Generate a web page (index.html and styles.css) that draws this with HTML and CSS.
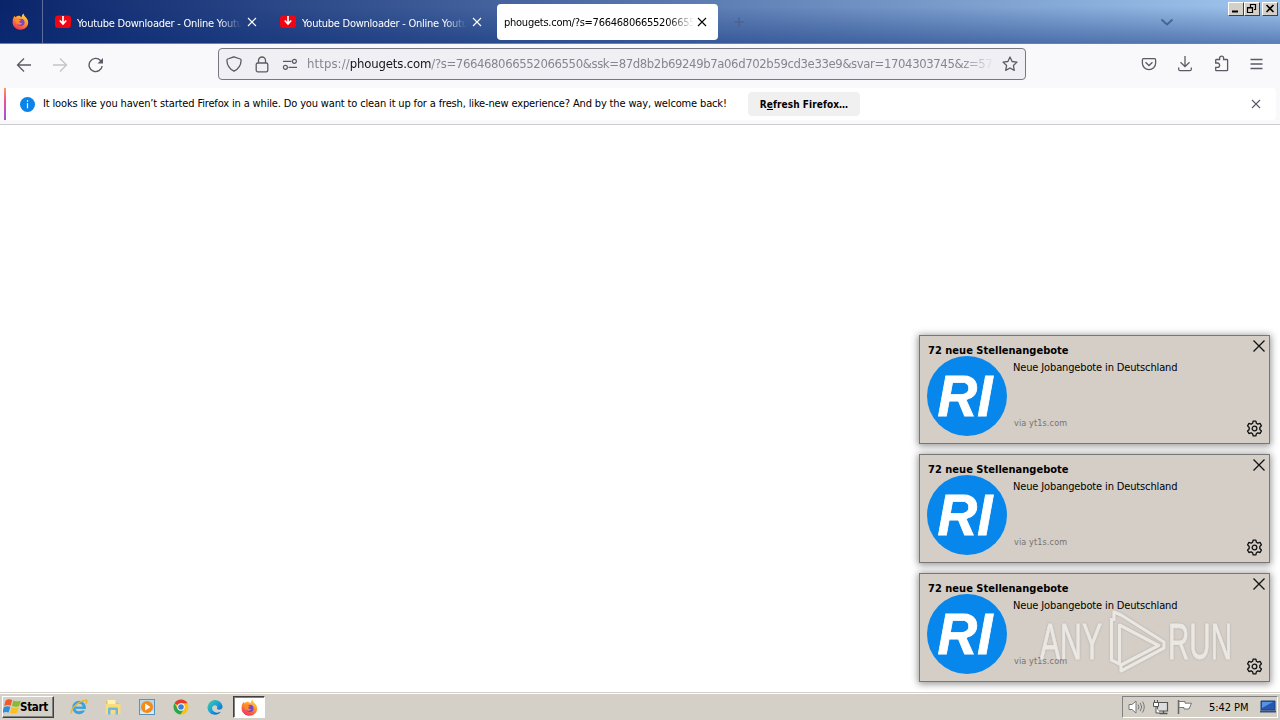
FILE: index.html
```html
<!DOCTYPE html>
<html lang="en">
<head>
<meta charset="utf-8">
<title>phougets.com</title>
<link rel="stylesheet" href="styles.css">
</head>
<body>
<svg class="defs" width="0" height="0">
  <defs>
    <linearGradient id="flame" x1="0.8" y1="0" x2="0.3" y2="1"><stop offset="0" stop-color="#ffe14a"/><stop offset=".45" stop-color="#ff9430"/><stop offset="1" stop-color="#f0305c"/></linearGradient>
    <linearGradient id="edgeg" x1="0" y1="0" x2="1" y2="1"><stop offset="0" stop-color="#45d48a"/><stop offset=".5" stop-color="#1a9de0"/><stop offset="1" stop-color="#1256a8"/></linearGradient>
    <symbol id="firefox" viewBox="0 0 16 16">
      <path d="M1 5.2 2.3 2.6l1 1.5C4.5 3 5.9 2.6 7 2.7L9 4c.3-1.6.8-2.6 1.9-3.5.2 2 1.5 2.8 2.7 4.3 1.4 1.700 1.900 3.600 1.500 5.600-.7 3.100-3.500 5.300-7 5.300C4 15.700.9 12.900.6 9.300.5 7.800.6 6.500 1 5.200z" fill="url(#flame)"/>
      <circle cx="8.300" cy="8.800" r="3.500" fill="#7b45c8"/>
      <path d="M3.300 5.200c1.300-.6 2.500-.2 3.400.8l2 .3c-.2 1-1.700 1.100-2 1.800.1 1.200 1.700 1.900 3.200 1.100-1.100 2.200-4 2.300-5.500.5C3.300 8.500 3 6.800 3.300 5.200z" fill="#ff8a2c"/>
    </symbol>
    <symbol id="ytdl" viewBox="0 0 16 14">
      <rect x="0" y="0.500" width="16" height="12.500" rx="3" fill="#f00612"/>
      <path d="M8 1v7.500M4.800 5.500 8 8.900l3.200-3.400" fill="none" stroke="#fff" stroke-width="1.700"/>
    </symbol>
    <symbol id="cross" viewBox="0 0 10 10"><path d="M1 1l8 8M9 1 1 9" fill="none" stroke="currentColor" stroke-width="1.100"/></symbol>
    <symbol id="thincross" viewBox="0 0 14 14"><path d="M1.500 1.500l11 11M12.500 1.500l-11 11" fill="none" stroke="#111" stroke-width="1.300"/></symbol>
    <symbol id="gear" viewBox="0 0 16 16">
      <path d="M6.700 1h2.600l.5 2.100 1.300.8 2.100-.7 1.300 2.300L13 7.100v1.800l1.500 1.500-1.300 2.300-2.100-.6-1.300.8L9.300 15H6.700l-.5-2.100-1.300-.8-2.100.6-1.300-2.300L3 8.900V7.100L1.500 5.500l1.300-2.300 2.100.7 1.300-.8z" fill="none" stroke="#111" stroke-width="1.250" stroke-linejoin="round"/>
      <circle cx="8" cy="8" r="2.200" fill="none" stroke="#111" stroke-width="1.200"/>
    </symbol>
    <symbol id="ri" viewBox="0 0 80 80">
      <circle cx="40" cy="40" r="40" fill="#0787ec"/>
      <text x="10.500" y="60" textLength="55" lengthAdjust="spacingAndGlyphs" class="ri-text">RI</text>
    </symbol>
  </defs>
</svg>
<div class="screen">
  <header class="titlebar">
    <div class="view"><svg width="17" height="17"><use href="#firefox"/></svg></div>
    <div class="tab"><svg width="16" height="14"><use href="#ytdl"/></svg><span class="tab-label">Youtube Downloader - Online Youtube</span><svg class="x" width="10" height="10"><use href="#cross"/></svg></div>
    <div class="tab"><svg width="16" height="14"><use href="#ytdl"/></svg><span class="tab-label">Youtube Downloader - Online Youtube</span><svg class="x" width="10" height="10"><use href="#cross"/></svg></div>
    <div class="tab active"><span class="tab-label">phougets.com/?s=7664680665520665508</span><svg class="x" width="10" height="10"><use href="#cross"/></svg></div>
    <svg class="plus" width="12" height="12"><path d="M6 1v10M1 6h10" stroke="#4e5f83" stroke-width="1.200"/></svg>
    <svg class="chev" width="14" height="8"><path d="M1.500 1.500 7 6.500l5.500-5" fill="none" stroke="#45658f" stroke-width="1.700"/></svg>
    <div class="winbtns">
      <i><svg width="16" height="13"><path d="M4 9.500h6" stroke="#000" stroke-width="2"/></svg></i><i><svg width="16" height="13"><path d="M6.500 5V2.500h5v5H10M6 2.500h6M3.500 5.500h5v5h-5zM3 6h6" fill="none" stroke="#000" stroke-width="1.200"/></svg></i><i class="last"><svg width="15" height="13"><path d="M4.500 3l7 7M11.500 3l-7 7" stroke="#000" stroke-width="1.600"/></svg></i>
    </div>
  </header>
  <nav class="toolbar">
    <div class="navbtns">
      <svg width="16" height="16"><path d="M15 8H1.500M8 1.500 1.500 8 8 14.500" fill="none" stroke="#5b5b66" stroke-width="1.300"/></svg>
      <svg width="16" height="16"><path d="M1 8h13.500M8 1.500 14.500 8 8 14.500" fill="none" stroke="#c3c3c9" stroke-width="1.300"/></svg>
      <svg width="16" height="16"><path d="M14.200 9a6.600 6.600 0 1 1-1.700-5.500L14 5" fill="none" stroke="#5b5b66" stroke-width="1.400"/><path d="M15 1v5.500H9.500z" fill="#5b5b66"/></svg>
    </div>
    <div class="urlbar">
      <svg width="16" height="16"><path d="M8 .8 14.300 3c.7.300.8.500.8 1.200-.1 5-2.400 8.600-7.100 11C3.300 12.800 1 9.200.9 4.200.9 3.500 1 3.300 1.700 3z" fill="none" stroke="#5b5b66" stroke-width="1.300"/></svg>
      <svg width="14" height="17"><rect x="1.200" y="7" width="11.600" height="8.800" rx="1.600" fill="none" stroke="#5b5b66" stroke-width="1.300"/><path d="M3.500 7V4.500a3.500 3.500 0 0 1 7 0V7" fill="none" stroke="#5b5b66" stroke-width="1.300"/></svg>
      <svg width="16" height="12"><path d="M1 3.300h8.500M6.500 9.300h8.500" stroke="#5b5b66" stroke-width="1.300"/><circle cx="12.400" cy="3.300" r="2" fill="none" stroke="#5b5b66" stroke-width="1.200"/><circle cx="3.400" cy="9.300" r="2" fill="none" stroke="#5b5b66" stroke-width="1.200"/></svg>
      <div class="url"><span class="scheme">https://</span><b>phougets.com</b>/?s=766468066552066550&amp;ssk=87d8b2b69249b7a06d702b59cd3e33e9&amp;svar=1704303745&amp;z=57</div>
      <svg width="16" height="16"><path d="m8 1 2.100 4.500 4.900.6-3.600 3.400.9 4.900L8 12l-4.300 2.400.9-4.900L1 6.100l4.900-.6z" fill="none" stroke="#5b5b66" stroke-width="1.300" stroke-linejoin="round"/></svg>
    </div>
    <div class="tools">
      <svg width="16" height="14"><path d="M2.500 1.600h11c.7 0 1.100.4 1.100 1.100v3.600c0 3.700-3 6.300-6.600 6.300S1.400 10 1.400 6.300V2.700c0-.7.400-1.100 1.100-1.100z" fill="none" stroke="#5b5b66" stroke-width="1.300"/><path d="m4.500 5.300 3.500 3.200 3.500-3.200" fill="none" stroke="#5b5b66" stroke-width="1.300"/></svg>
      <svg width="14" height="16"><path d="M7 0v10.500M2.500 6.300 7 10.700l4.500-4.400M.7 11.500v1.700c0 .9.600 1.500 1.500 1.500h9.600c.9 0 1.500-.6 1.500-1.500v-1.700" fill="none" stroke="#5b5b66" stroke-width="1.300"/></svg>
      <svg width="15" height="17"><path d="M1.700 8V5.300c0-.5.300-.8.800-.8h3.100V3.100a2 2 0 0 1 4 0v1.400h3.200c.5 0 .8.300.8.800v9.600c0 .5-.3.800-.8.800H2.500c-.5 0-.8-.3-.8-.8v-2.600h1.800a1.800 1.800 0 0 0 0-4.300z" fill="none" stroke="#5b5b66" stroke-width="1.300"/></svg>
      <svg width="13" height="12"><path d="M.5 1.500h12M.5 6h12M.5 10.500h12" stroke="#5b5b66" stroke-width="1.300"/></svg>
    </div>
  </nav>
  <div class="infowrap">
    <div class="info">
      <svg width="15" height="15"><circle cx="7.500" cy="7.500" r="7.500" fill="#0a84e8"/><path d="M7.500 6.300v5M7.500 3.300v1.500" stroke="#fff" stroke-width="1.200"/></svg>
      <span class="msg">It looks like you haven’t started Firefox in a while. Do you want to clean it up for a fresh, like-new experience? And by the way, welcome back!</span>
      <button class="refresh">R<u>e</u>fresh Firefox…</button>
      <svg class="x" width="10" height="10"><use href="#cross"/></svg>
    </div>
  </div>
  <main class="page"></main>
  <footer class="taskbar">
    <div class="start"><svg width="19" height="18" viewBox="1 2 15 14"><path d="M3 4c2-1.500 3.500-1.300 5.300-.5L7 8C5.500 7.300 3.800 7.300 1.900 8.300z" fill="#ef5a28"/><path d="M9.200 3.800c1.900.9 3.800 1 6 0l-1.500 4.400c-1.900 1-3.600.8-5.700-.1z" fill="#84bd2f"/><path d="M1.700 9.100c2-1 3.500-.9 5.100-.3l-1.300 4.600c-1.600-.8-3.100-.6-5.100.3z" fill="#2f8fd9"/><path d="M7.800 9.100c1.800.8 3.600.9 5.700 0L12 13.600c-2 .9-3.700.7-5.500-.1z" fill="#f8c121"/></svg><span>Start</span></div>
    <div class="quick">
      <svg width="18" height="18"><circle cx="9" cy="9.500" r="5.300" fill="none" stroke="#38a3e0" stroke-width="3"/><path d="M5 9.700h10.500" stroke="#38a3e0" stroke-width="2.300"/><path d="M11 12.500h6v-1.600h-5z" fill="#d4d0c8"/><path d="M1.500 15.500C.2 11 8 3 16.300 2.200c1 .8.400 2.300-.5 3.600" fill="none" stroke="#e9b62e" stroke-width="1.500"/></svg>
      <svg width="18" height="18"><path d="M2 3h6l1 2h6v11H2z" fill="#eebf4e"/><path d="M3.500 2h8v6h-8z" fill="#fff3b0"/><path d="M1.500 6h15v10h-15z" fill="#f8dc80"/><path d="M4 16.500V11c0-1 .5-1.500 1.500-1.500h7c1 0 1.500.5 1.500 1.500v5.500h-2.500V12h-5v4.500z" fill="#6fb9de"/></svg>
      <svg width="18" height="18"><rect x="1.500" y="1.500" width="15" height="15" fill="#b9d7ec" stroke="#5793bd"/><path d="M2 13h14v3H2z" fill="#dae8f2"/><circle cx="9" cy="9" r="6" fill="#f58a14"/><path d="M7.200 5.500 12.500 9l-5.300 3.500z" fill="#fff"/></svg>
      <svg width="18" height="18"><circle cx="9" cy="9" r="7.500" fill="#fbc116"/><path d="M9 9 2.500 5.300A7.500 7.500 0 0 1 15.500 5.300H9z" fill="#e33b2e"/><path d="M2.500 5.300A7.500 7.500 0 0 0 8.500 16.500L12 10.800 5.700 11z" fill="#2aa64c"/><circle cx="9" cy="9" r="3.700" fill="#fff"/><circle cx="9" cy="9" r="2.800" fill="#3e7de8"/></svg>
      <svg width="18" height="18"><path d="M1.500 9A7.600 7.600 0 0 1 16.500 8c.4 3-2 4-4.500 3.600-1.500-.2-1.300-.8-.8-1.700C11.500 8 9.700 7 8 7.500c-2.700.9-2.600 5 .7 6.600 2 .9 4.200.6 6.200-.3C11.500 18.800 1.500 17.500 1.500 9z" fill="url(#edgeg)"/></svg>
    </div>
    <div class="task-active"><svg width="17" height="17"><use href="#firefox"/></svg></div>
    <div class="tray">
      <svg width="19" height="16"><path d="M2 5.500h3L9 2v12L5 10.500H2z" fill="#fff" stroke="#777" stroke-width="1"/><path d="M11 5.500q2 2.500 0 5M13.200 3.800q3 4.200 0 8.400M15.500 2.500q3.500 5.500 0 11" fill="none" stroke="#777" stroke-width="1"/></svg>
      <svg width="18" height="16"><path d="M5.500 3.500h10v8.500h-10z" fill="#ddd" stroke="#555" stroke-width="1.200"/><path d="M7.500 14.500h8M11.500 12v2" stroke="#555" stroke-width="1.300"/><path d="M1.500 3.500h5v4h-5zM2.500 1v2M5.500 1v2M4 8v6h4" fill="#fff" stroke="#555" stroke-width="1"/></svg>
      <svg width="18" height="16"><path d="M2.500 1v14" stroke="#666" stroke-width="1.500"/><path d="M3 2.500h6v1.700h6.500L13 10H8V8.500H3z" fill="#fff" stroke="#777" stroke-width="1"/></svg>
      <span class="clock">5:42 PM</span>
      <svg width="17" height="14"><path d="M1 1h14v9H1z" fill="#2359b5" stroke="#174080"/><path d="M2 2h11L2 8z" fill="#5c91df"/><path d="M0 11.500h16" stroke="#384f76" stroke-width="2"/></svg>
    </div>
  </footer>

  <aside class="toasts">
    <article class="toast"><h2>72 neue Stellenangebote</h2><div class="tbody"><svg width="80" height="80"><use href="#ri"/></svg><div class="ttext"><p>Neue Jobangebote in Deutschland</p><small>via yt1s.com</small></div></div><svg class="tclose" width="14" height="14"><use href="#thincross"/></svg><svg class="tgear" width="17" height="17"><use href="#gear"/></svg></article>
    <article class="toast"><h2>72 neue Stellenangebote</h2><div class="tbody"><svg width="80" height="80"><use href="#ri"/></svg><div class="ttext"><p>Neue Jobangebote in Deutschland</p><small>via yt1s.com</small></div></div><svg class="tclose" width="14" height="14"><use href="#thincross"/></svg><svg class="tgear" width="17" height="17"><use href="#gear"/></svg></article>
    <article class="toast"><h2>72 neue Stellenangebote</h2><div class="tbody"><svg width="80" height="80"><use href="#ri"/></svg><div class="ttext"><p>Neue Jobangebote in Deutschland</p><small>via yt1s.com</small></div></div><svg class="tclose" width="14" height="14"><use href="#thincross"/></svg><svg class="tgear" width="17" height="17"><use href="#gear"/></svg></article>
  </aside>
  <svg class="watermark" width="200" height="70" viewBox="0 0 200 70">
    <text x="6" y="53" textLength="62" lengthAdjust="spacingAndGlyphs" class="wm-text">ANY</text>
    <path d="M77.500 12v42l8 4V19l39 20.500L87 59v6l43-23v-6L87 9l-7-3v9" fill="none" stroke="#f5f3ef" stroke-width="3.200" stroke-linejoin="round"/>
    <text x="134" y="53" textLength="64" lengthAdjust="spacingAndGlyphs" class="wm-text">RUN</text>
  </svg>
</div>
</body>
</html>
```
FILE: styles.css
```css
* { box-sizing: border-box; }
body { margin: 0; font-family: "DejaVu Sans Condensed", "DejaVu Sans", sans-serif; font-stretch: condensed; font-size: 11px; color: #000; overflow: hidden; }
svg { display: block; flex: none; }
.defs { position: absolute; }
.screen { width: 1280px; height: 720px; display: flex; flex-direction: column; background: #fff; position: relative; overflow: hidden; }

.titlebar { height: 44px; display: flex; align-items: center; border-bottom: 1px solid #74809b; background: linear-gradient(to bottom, rgba(10,45,120,0) 15%, rgba(10,45,120,.46) 100%), linear-gradient(to right, #0a246a, #a0c6ee); }
.view { width: 43px; height: 43px; border-right: 1px solid #5b6e9c; display: flex; align-items: center; padding-left: 11.500px; }
.tab { width: 225px; height: 36px; display: flex; align-items: center; padding: 1px 11px 0 12px; gap: 6px; color: #fff; }
.tab-label { flex: 1; min-width: 0; overflow: hidden; white-space: nowrap; letter-spacing: -.25px; line-height: 16px; padding-top: 3px; -webkit-mask-image: linear-gradient(to right, #000 86%, transparent); mask-image: linear-gradient(to right, #000 86%, transparent); }
.tab .x { margin-left: -1px; }
.tab.active { width: 221px; margin-left: 4px; background: #fff; color: #000; border-radius: 4px; padding: 0 11px 0 7px; gap: 4px; }
.plus { margin-left: 15px; }
.chev { margin-left: 415px; }
.winbtns { display: flex; align-self: flex-start; margin: 2px 0 0 54px; }
.winbtns i { display: block; width: 16px; height: 14px; background: #d4d0c8; border: 1px solid; border-color: #fff #404040 #404040 #fff; overflow: hidden; }
.winbtns i svg { margin: -1px; }
.winbtns .last { margin-left: 2px; }

.toolbar { height: 44px; background: #f9f9fb; display: flex; align-items: center; padding-bottom: 4px; }
.navbtns { width: 218px; padding: 1px 0 0 16px; display: flex; gap: 20px; }
.urlbar { width: 808px; height: 32px; border: 1px solid #77777f; border-radius: 4px; background: #f0f0f4; display: flex; align-items: center; padding: 0 7px; }
.urlbar svg:nth-child(2) { margin-left: 13px; }
.urlbar svg:nth-child(3) { margin-left: 13px; }
.url { width: 688px; margin: 0 7px 0 9px; overflow: hidden; white-space: nowrap; font-size: 13px; line-height: 20px; color: #85858f; letter-spacing: -.39px; -webkit-mask-image: linear-gradient(to right, #000 95%, transparent); mask-image: linear-gradient(to right, #000 95%, transparent); }
.scheme { letter-spacing: .1px; }
.url b { font-weight: normal; color: #15141a; letter-spacing: -.15px; }
.tools { margin-left: auto; display: flex; align-items: center; gap: 21px; padding: 0 17.500px 1px 0; }
.tools svg:nth-child(2) { margin-right: 1px; }

.infowrap { height: 37px; background: #f9f9fb; border-bottom: 1px solid #ccccd0; padding: 0 4px 4px; }
.info { height: 32px; background: linear-gradient(#ff9a5c, #f04f9a 40%, #9059d8) left / 2px 100% no-repeat #fff; border-radius: 0 4px 4px 0; display: flex; align-items: center; padding: 0 15px 0 16px; }
.msg { width: 705px; padding: 0 0 2px 8px; white-space: nowrap; letter-spacing: -.15px; }
.refresh { width: 112px; height: 24px; margin-left: 8px; border: 0; padding: 0; background: #f0f0f1; border-radius: 4px; font: bold 10px "DejaVu Sans Condensed", sans-serif; font-stretch: condensed; letter-spacing: .08px; color: #000; }
.info > .x { margin-left: auto; color: #5b5b66; }
.page { flex: 1; }

.taskbar { height: 28px; background: #d4d0c8; border-top: 1px solid #d4d0c8; box-shadow: inset 0 1px #fff; display: flex; align-items: center; padding: 1px 2px 0; }
.start { width: 52px; height: 22px; border: 1px solid; border-color: #fff #404040 #404040 #fff; box-shadow: inset -1px -1px #808080; display: flex; align-items: center; font-weight: bold; font-size: 11.500px; letter-spacing: -.3px; }
.start span { margin-left: -2px; }
.quick { display: flex; gap: 16px; margin-left: 16px; width: 163px; }
.task-active { width: 32px; height: 22px; border: 1px solid; border-color: #404040 #fff #fff #404040; box-shadow: inset 1px 1px #808080; background: #fff; display: flex; align-items: center; justify-content: center; }
.tray { margin-left: auto; width: 156px; height: 22px; border: 1px solid; border-color: #808080 #fff #fff #808080; display: flex; align-items: center; padding-left: 4px; gap: 6px; }
.clock { width: 45px; margin-left: 9px; white-space: nowrap; letter-spacing: -.05px; }

.toasts { position: absolute; left: 919px; top: 335px; display: flex; flex-direction: column; gap: 10px; }
.toast { position: relative; width: 351px; height: 109px; background: #d4cec7; border: 1px solid #777; box-shadow: 0 1px 7px 1px rgba(0,0,0,.42); padding: 7px 7px 0; }
.toast h2 { margin: 0 0 0 1px; font-size: 11px; line-height: 15px; height: 13px; white-space: nowrap; letter-spacing: .02px; }
.tbody { display: flex; }
.ttext { padding-left: 6px; display: flex; flex-direction: column; }
.ttext p { margin: 5px 0 0; line-height: 14px; letter-spacing: -.14px; white-space: nowrap; }
.ttext small { font-size: 9px; line-height: 12px; margin: 42px 0 0 1px; letter-spacing: .12px; color: #77736f; }
.tclose { position: absolute; right: 3px; top: 3px; }
.tgear { position: absolute; right: 6.500px; bottom: 6.500px; }
.ri-text { font: italic bold 58px "Liberation Sans", Arial, sans-serif; fill: #fff; stroke: #fff; stroke-width: .8px; }
.watermark { position: absolute; left: 1034px; top: 606px; opacity: .7; filter: drop-shadow(0 0 1px rgba(80,80,80,.4)); }
.wm-text { font: 50px "Liberation Sans", Arial, sans-serif; fill: #f5f3ef; stroke: #f5f3ef; stroke-width: .8px; }
```
